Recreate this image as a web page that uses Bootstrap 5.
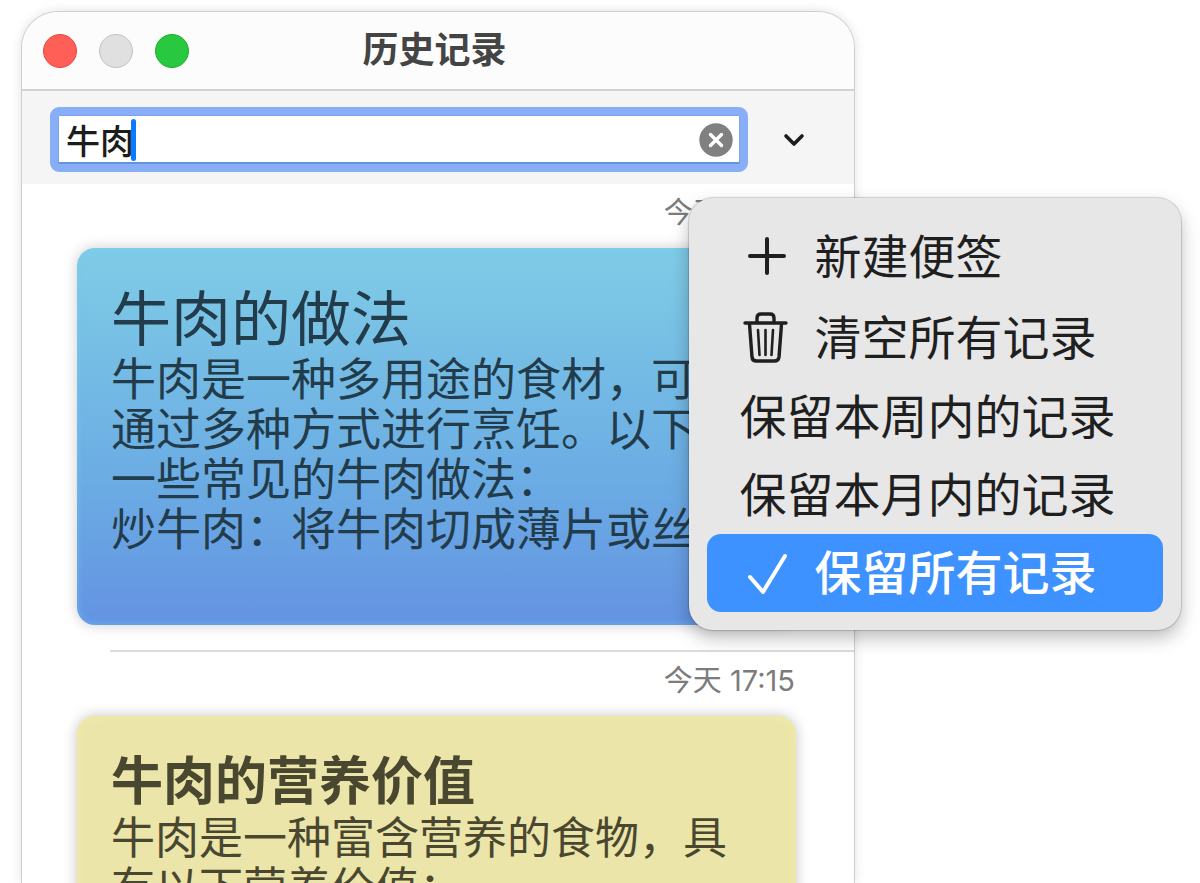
<!DOCTYPE html>
<html lang="zh-CN">
<head>
<meta charset="utf-8">
<meta name="viewport" content="width=device-width, initial-scale=1">
<title>历史记录</title>
<link rel="stylesheet" href="https://cdn.jsdelivr.net/npm/bootstrap@5.3.0/dist/css/bootstrap.min.css">
<style>
  body { font-family: "Noto Sans CJK SC", sans-serif; background: #fff; }
  .stage { padding: 12px 22px 0; }
  .app-window {
    width: 100%; max-width: 832px; height: calc(100vh - 12px);
    border-radius: 36px 36px 0 0; background: #fff;
    box-shadow: 0 0 0 1px #cfcfcf, 0 0 12px rgba(0,0,0,.14);
  }
  .title-bar { height: 79px; padding: 0 28px 0 21px; background: #fcfcfc; border-bottom: 2px solid #d2d2d2; border-radius: 36px 36px 0 0; }
  .bar-side { flex: 1 1 0; }
  .window-title { padding-bottom: 8px; font-size: 36px; line-height: 48px; font-weight: 700; color: #444; }
  .lights { gap: 22px; }
  .light { width: 34px; height: 34px; padding: 0; border-radius: 50%; border: 1px solid; }
  .light-close { background: #ff5f57; border-color: #e9473f; }
  .light-min { background: #e0e0e0; border-color: #c2c2c2; }
  .light-zoom { background: #28c840; border-color: #1daf2d; }
  .tool-bar { height: 93px; padding: 4px 38px 0 28px; gap: 24px; background: #f5f5f5; position: relative; z-index: 5; }
  .search-box { height: 65px; padding: 0 7px 0 8px; background: #fff; border: 8px solid #89aef8; border-radius: 9px; box-shadow: inset 0 -2px 0 #6591e0, inset 0 0 0 1px #7ba2ee; }
  .search-text { width: 68px; height: 48px; padding: 0; border: 0; outline: 0; background: none; font-size: 34px; font-weight: 500; line-height: 48px; color: #1c1c1c; }
  .caret { width: 5px; height: 42px; margin-left: -3px; border-radius: 3px; background: #0a7aff; }
  .plain-btn { padding: 0; border: 0; background: none; line-height: 0; }
  .more-btn { width: 44px; height: 44px; }
  .action-menu {
    display: block; position: absolute; top: 93px; left: 80%; width: 492px;
    margin: 14px 0 0 1px; padding: 18px 18px; border: 0; border-radius: 24px; background: #e7e7e7;
    box-shadow: 0 0 1px 1px rgba(0,0,0,.16), 0 8px 18px rgba(0,0,0,.26);
    font-size: 47px;
  }
  .action-menu .dropdown-item { display: flex; align-items: center; height: 78px; padding: 0 33px; gap: 25px; border-radius: 14px; color: #1f1f1f; line-height: 68px; }
  .action-menu .with-icon { height: 81px; }
  .action-menu .dropdown-item.active { background: #3d92ff; color: #fff; font-weight: 500; }
  .menu-label { padding-bottom: 6px; }
  .menu-icon { width: 50px; height: 56px; flex: none; }
  .stamp { height: 56px; margin-bottom: 8px; padding-right: 59px; line-height: 58px; font-family: Inter, "Noto Sans CJK SC", sans-serif; font-size: 29px; color: #7c7c7c; }
  .note { height: 377px; margin: 0 58px 0 55px; padding: 30px 34px; border-radius: 18px; }
  .note h2 { margin: 0; }
  .note p { margin: 0; line-height: 50px; }
  .note-blue { color: #233c4b; background: linear-gradient(#7fcce6, #6bace4 62%, #6493e2); box-shadow: 0 0 14px rgba(0,0,0,.2), inset 0 0 8px rgba(120,205,250,.5); }
  .note-blue h2 { font-size: 60px; line-height: 74px; font-weight: 400; }
  .note-blue p { font-size: 45px; }
  .note-yellow { color: #4a4730; background: #ebe5a9; box-shadow: 0 0 14px rgba(0,0,0,.24), inset 0 0 8px #f4eda6; }
  .note-yellow h2 { font-size: 52px; line-height: 64px; font-weight: 700; }
  .note-yellow p { font-size: 44px; }
  .rule { height: 2px; margin: 25px 0 0 88px; background: #dcdcdc; border: 0; opacity: 1; }
</style>
</head>
<body class="overflow-hidden">
<div class="stage">
  <main class="app-window d-flex flex-column">
    <header class="title-bar d-flex align-items-center flex-shrink-0">
      <div class="lights bar-side d-flex">
        <button class="light light-close" type="button" aria-label="关闭"></button>
        <button class="light light-min" type="button" aria-label="最小化"></button>
        <button class="light light-zoom" type="button" aria-label="缩放"></button>
      </div>
      <h1 class="window-title mb-0">历史记录</h1>
      <div class="bar-side"></div>
    </header>

    <div class="tool-bar d-flex align-items-center flex-shrink-0">
      <div class="search-box d-flex align-items-center flex-grow-1" role="search">
        <input class="search-text" type="text" value="牛肉" aria-label="搜索">
        <span class="caret"></span>
        <button class="plain-btn ms-auto" type="button" aria-label="清除">
          <svg width="34" height="34" viewBox="0 0 34 34"><circle cx="17" cy="17" r="16.7" fill="#808080"/><path d="M11.5 11.5l11 11m0-11l-11 11" stroke="#fff" stroke-width="3.4" stroke-linecap="round"/></svg>
        </button>
      </div>
      <div class="dropdown position-static">
        <button class="plain-btn more-btn" type="button" aria-label="更多" aria-expanded="true">
          <svg width="24" height="16" viewBox="0 0 24 16" fill="none" stroke="#1c1c1c" stroke-width="3.6" stroke-linecap="round" stroke-linejoin="round"><path d="M4 4l8 8 8-8"/></svg>
        </button>
        <ul class="dropdown-menu action-menu show">
          <li><button class="dropdown-item with-icon" type="button">
            <svg class="menu-icon" viewBox="0 0 50 56" fill="none" stroke="currentColor" stroke-width="4" stroke-linecap="round"><path d="M10 27h34M27 10v34"/></svg><span class="menu-label">新建便签</span></button></li>
          <li><button class="dropdown-item with-icon" type="button">
            <svg class="menu-icon" viewBox="0 0 50 56" fill="none" stroke="currentColor" stroke-width="3.4" stroke-linecap="round" stroke-linejoin="round"><path d="M5 13h41M17 12V8q0-4 4-4h9q4 0 4 4v4M9.500 14l2.500 33q.3 4 4.500 4h18q4 0 4.500-4L41.500 14"/><path d="M18 20l1.500 25M25.500 20v25M33 20l-1.500 25" stroke-width="2.600"/></svg><span class="menu-label">清空所有记录</span></button></li>
          <li><button class="dropdown-item" type="button"><span class="menu-label">保留本周内的记录</span></button></li>
          <li><button class="dropdown-item" type="button"><span class="menu-label">保留本月内的记录</span></button></li>
          <li><button class="dropdown-item active" type="button">
            <svg class="menu-icon" viewBox="0 0 50 56" fill="none" stroke="currentColor" stroke-width="4" stroke-linecap="round" stroke-linejoin="round"><path d="M10 32l13 15L45 11"/></svg><span class="menu-label">保留所有记录</span></button></li>
        </ul>
      </div>
    </div>

    <section class="flex-grow-1 overflow-hidden">
      <article>
        <div class="stamp text-end">今天 17:15</div>
        <div class="note note-blue overflow-hidden">
          <h2>牛肉的做法</h2>
          <p>牛肉是一种多用途的食材，可以通过多种方式进行烹饪。以下是一些常见的牛肉做法：</p>
          <p>炒牛肉：将牛肉切成薄片或丝</p>
        </div>
      </article>
      <hr class="rule">
      <article>
        <div class="stamp text-end">今天 17:15</div>
        <div class="note note-yellow overflow-hidden">
          <h2>牛肉的营养价值</h2>
          <p>牛肉是一种富含营养的食物，具有以下营养价值：</p>
        </div>
      </article>
    </section>
  </main>
</div>
<script src="https://cdn.jsdelivr.net/npm/bootstrap@5.3.0/dist/js/bootstrap.bundle.min.js"></script>
</body>
</html>
